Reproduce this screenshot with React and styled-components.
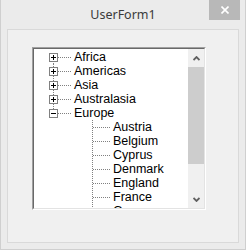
import React from "react";
import styled, { createGlobalStyle } from "styled-components";

const GlobalStyle = createGlobalStyle`
  html,
  body {
    margin: 0;
    padding: 0;
    background: #ebebeb;
  }

  body {
    font-family: "Liberation Sans", Arial, sans-serif;
  }
`;

const Window = styled.div`
  box-sizing: border-box;
  display: flex;
  flex-direction: column;
  width: 246px;
  height: 250px;
  background: #ebebeb;
  border: 1px solid #cfcfcf;
  border-top: none;
`;

const TitleBar = styled.div`
  display: grid;
  grid-template-columns: 1fr auto 1fr;
  align-items: start;
  flex: none;
  height: 29px;
`;

const Title = styled.div`
  grid-column: 2;
  padding-top: 1px;
  color: #3a3a3a;
  font-family: "Noto Sans", "Open Sans", sans-serif;
  font-size: 12.5px;
  line-height: 28px;
  white-space: nowrap;
`;

const CloseButton = styled.div`
  grid-column: 3;
  justify-self: end;
  display: flex;
  align-items: center;
  justify-content: center;
  width: 31px;
  height: 20px;
  margin-right: 5px;
  background: #b8b8b8;
`;

const Form = styled.div`
  flex: 1;
  margin: 0 6px 6px;
  padding: 17px 0 0 24px;
  background: #f0f0f0;
  border: 1px solid #d9d9d9;
`;

const ListBox = styled.div`
  box-sizing: border-box;
  width: 174px;
  height: 163px;
  border: 1px solid;
  border-color: #a0a0a0 #ffffff #ffffff #a0a0a0;
`;

const ListInner = styled.div`
  box-sizing: border-box;
  display: flex;
  height: 100%;
  background: #ffffff;
  border: 1px solid;
  border-color: #696969 #e3e3e3 #e3e3e3 #696969;
`;

const TreePane = styled.div`
  flex: 1;
  min-width: 0;
  padding-top: 1px;
  overflow: hidden;
`;

const Row = styled.div`
  display: flex;
  height: 14px;
`;

const Gutter = styled.svg`
  display: block;
  flex: none;
  width: 39px;
  height: 14px;
  shape-rendering: crispEdges;
`;

const Label = styled.span`
  padding-left: 1px;
  color: #000000;
  font-size: 12.5px;
  line-height: 14px;
  white-space: nowrap;
`;

const ScrollBar = styled.div`
  display: flex;
  flex-direction: column;
  flex: none;
  width: 16px;
  background: #f0f0f0;
`;

const ArrowButton = styled.div`
  box-sizing: border-box;
  display: flex;
  align-items: center;
  justify-content: center;
  height: 17px;
  padding-top: ${props => (props.$down ? "0" : "2px")};
`;

const Track = styled.div`
  flex: 1;
  padding-top: 1px;
`;

const Thumb = styled.div`
  height: 97px;
  background: #cdcdcd;
`;

const tree = [
  { name: "Africa" },
  { name: "Americas" },
  { name: "Asia" },
  { name: "Australasia" },
  {
    name: "Europe",
    open: true,
    children: ["Austria", "Belgium", "Cyprus", "Denmark", "England", "France", "Germany"],
  },
];

/* one 39px column of tree lines: vertical dots, stub and the +/- box */
function Connector({ up, down, stub, box }) {
  return (
    <Gutter viewBox="0 0 39 14">
      {(up || down) && (
        <line
          x1="19.5"
          x2="19.5"
          y1={up ? 0 : 7}
          y2={down ? 14 : 7}
          stroke="#808080"
          strokeDasharray="1 1"
        />
      )}
      {stub && (
        <line x1={box ? 24 : 20} x2="38" y1="7.5" y2="7.5" stroke="#808080" strokeDasharray="1 1" />
      )}
      {box && (
        <g>
          <rect x="15.5" y="3.5" width="8" height="8" fill="#ffffff" stroke="#808080" />
          <line x1="17" x2="22" y1="7.5" y2="7.5" stroke="#000000" />
          {box === "plus" && <line x1="19.5" x2="19.5" y1="5" y2="10" stroke="#000000" />}
        </g>
      )}
    </Gutter>
  );
}

function Chevron({ down }) {
  return (
    <svg width="7" height="5" viewBox="0 0 7 5">
      <polyline
        points={down ? "0.5,1 3.5,4 6.5,1" : "0.5,4 3.5,1 6.5,4"}
        fill="none"
        stroke="#606060"
        strokeWidth="1.8"
      />
    </svg>
  );
}

export default function App() {
  const rows = [];

  tree.forEach((node, i) => {
    const first = i === 0;
    const last = i === tree.length - 1;
    rows.push(
      <Row key={node.name}>
        <Connector up={!first} down={!last} stub box={node.open ? "minus" : "plus"} />
        <Label>{node.name}</Label>
      </Row>
    );
    if (node.open) {
      node.children.forEach(child => {
        rows.push(
          <Row key={child}>
            <Connector up={!last} down={!last} />
            <Connector up down stub />
            <Label>{child}</Label>
          </Row>
        );
      });
    }
  });

  return (
    <>
      <GlobalStyle />
      <Window>
        <TitleBar>
          <Title>UserForm1</Title>
          <CloseButton>
            <svg width="8" height="8" viewBox="0 0 8 8">
              <path d="M0.5 0.5 L7.5 7.5 M7.5 0.5 L0.5 7.5" stroke="#ffffff" strokeWidth="1.6" />
            </svg>
          </CloseButton>
        </TitleBar>
        <Form>
          <ListBox>
            <ListInner>
              <TreePane>{rows}</TreePane>
              <ScrollBar>
                <ArrowButton>
                  <Chevron />
                </ArrowButton>
                <Track>
                  <Thumb />
                </Track>
                <ArrowButton $down>
                  <Chevron down />
                </ArrowButton>
              </ScrollBar>
            </ListInner>
          </ListBox>
        </Form>
      </Window>
    </>
  );
}
